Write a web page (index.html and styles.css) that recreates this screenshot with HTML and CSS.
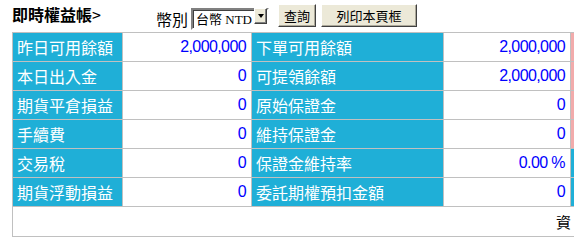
FILE: index.html
```html
<!DOCTYPE html>
<html lang="zh-Hant">

<head>
    <meta charset="UTF-8">
    <title>即時權益帳</title>
    <link rel="stylesheet" href="styles.css">
</head>

<body>
    <!-- Header -->
    <div class="toolbar">
        <div class="title">即時權益帳<span class="arrow">&gt;</span></div>
        <span class="field-label">幣別</span>
        <div class="combo">
            <select class="combo-select">
                <option>台幣 NTD</option>
                <option>美元 USD</option>
            </select>
            <span class="combo-btn"><span class="tri"></span></span>
        </div>
        <button class="btn btn-query">查詢</button>
        <button class="btn btn-print">列印本頁框</button>
    </div>

    <!-- Equity table -->
    <table class="equity">
        <colgroup>
            <col class="c-label1">
            <col class="c-value1">
            <col class="c-label2">
            <col class="c-value2">
            <col class="c-extra">
        </colgroup>
        <tr>
            <td class="label">昨日可用餘額</td>
            <td class="value">2,000,000</td>
            <td class="label">下單可用餘額</td>
            <td class="value">2,000,000</td>
            <td class="extra pink"></td>
        </tr>
        <tr>
            <td class="label">本日出入金</td>
            <td class="value">0</td>
            <td class="label">可提領餘額</td>
            <td class="value">2,000,000</td>
            <td class="extra pink"></td>
        </tr>
        <tr>
            <td class="label">期貨平倉損益</td>
            <td class="value">0</td>
            <td class="label">原始保證金</td>
            <td class="value">0</td>
            <td class="extra pink"></td>
        </tr>
        <tr>
            <td class="label">手續費</td>
            <td class="value">0</td>
            <td class="label">維持保證金</td>
            <td class="value">0</td>
            <td class="extra pink"></td>
        </tr>
        <tr>
            <td class="label">交易稅</td>
            <td class="value">0</td>
            <td class="label">保證金維持率</td>
            <td class="value">0.00&nbsp;%</td>
            <td class="extra blue"></td>
        </tr>
        <tr>
            <td class="label">期貨浮動損益</td>
            <td class="value">0</td>
            <td class="label">委託期權預扣金額</td>
            <td class="value">0</td>
            <td class="extra blue"></td>
        </tr>
        <tr>
            <td class="note" colspan="5">資</td>
        </tr>
    </table>
</body>

</html>
```

FILE: styles.css
```css
/* General */
html,
body {
    overflow: hidden;
}

body {
    margin: 0;
    padding: 4px 0 0 12px;
    background: #ffffff;
    color: #000;
    font-family: "Noto Sans CJK TC", "Liberation Sans", sans-serif;
}

/* Header */
.toolbar {
    display: flex;
    align-items: center;
    height: 23px;
}

.title {
    width: 144px;
    font-size: 16px;
    font-weight: bold;
    line-height: 23px;
    margin-top: -2px;
}

.title .arrow {
    font-weight: normal;
}

.field-label {
    font-size: 16px;
    line-height: 16px;
    padding-top: 7px;
    margin-right: 3px;
}

.combo {
    position: relative;
    width: 78px;
    height: 22px;
    margin-right: 9px;
}

.combo-select {
    appearance: none;
    -webkit-appearance: none;
    width: 78px;
    height: 22px;
    margin: 0;
    padding: 0 0 0 3px;
    border: 2px solid;
    border-color: #808080 #ffffff #ffffff #808080;
    box-shadow: inset 1px 1px 0 #404040;
    background: #fff;
    border-radius: 0;
    font-family: "Liberation Serif", "Noto Sans CJK TC", serif;
    font-size: 13px;
    color: #000;
    outline: none;
}

.combo-btn {
    position: absolute;
    top: 3px;
    right: 2px;
    width: 13px;
    height: 16px;
    box-sizing: border-box;
    background: #ece9d8;
    border: 1px solid;
    border-color: #ffffff #404040 #404040 #ffffff;
    box-shadow: inset -1px -1px 0 #808080;
    display: flex;
    align-items: center;
    justify-content: center;
}

.combo-btn .tri {
    width: 0;
    height: 0;
    border-left: 3.5px solid transparent;
    border-right: 3.5px solid transparent;
    border-top: 4px solid #000;
    margin-top: 1px;
}

.btn {
    height: 23px;
    padding: 0;
    background: #ece9d8;
    border: 1px solid;
    border-color: #ffffff #404040 #404040 #ffffff;
    box-shadow: inset -1px -1px 0 #aca899;
    font-family: "Noto Sans CJK TC", sans-serif;
    font-size: 13px;
    color: #000;
    cursor: pointer;
}

.btn-query {
    width: 38px;
    margin-right: 5px;
}

.btn-print {
    width: 96px;
}

/* Equity table */
.equity {
    border-collapse: collapse;
    table-layout: fixed;
    width: 680px;
    margin-top: 5px;
}

.c-label1 { width: 110px; }
.c-value1 { width: 129px; }
.c-label2 { width: 192px; }
.c-value2 { width: 127px; }
.c-extra { width: 122px; }

.equity td {
    border: 1px solid #c0c0c0;
    height: 28px;
    padding: 0;
    white-space: nowrap;
}

.equity .label {
    background: #1fafd7;
    color: #ffffff;
    font-size: 16px;
    padding-left: 4px;
}

.equity .value {
    background: #ffffff;
    color: #0000ff;
    font-family: "Liberation Sans", sans-serif;
    font-size: 16px;
    letter-spacing: -0.6px;
    text-align: right;
    padding-right: 5px;
}

.equity .pink {
    background: #f2abab;
}

.equity .blue {
    background: #1fafd7;
}

.equity .note {
    height: 29px;
    font-size: 15px;
    padding-left: 543px;
    border-right: none;
}
```
